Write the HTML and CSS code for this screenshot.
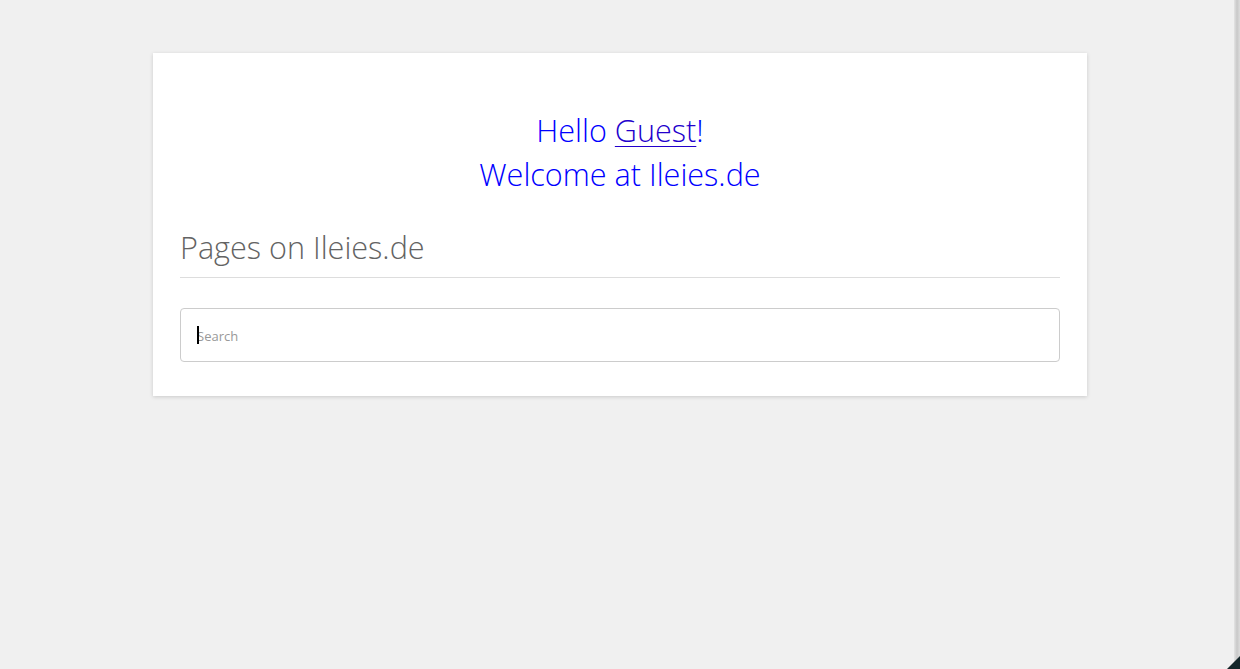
FILE: index.html
```html
<!DOCTYPE html>
<html lang="en">
<head>
<meta charset="utf-8">
<title>Ileies.de</title>
<link rel="stylesheet" href="styles.css">
</head>
<body>
<main class="card">
  <div class="greeting">
    <div class="greeting-line">Hello <a href="#" class="guest">Guest</a>!</div>
    <div class="greeting-line">Welcome at Ileies.de</div>
  </div>
  <h2 class="section-title">Pages on Ileies.de</h2>
  <div class="search-wrap">
    <input class="search" type="text" placeholder="Search" autofocus>
    <span class="caret"></span>
  </div>
</main>
<div class="edge"></div>
<div class="corner"></div>
</body>
</html>
```

FILE: styles.css
```css
html, body {
  margin: 0;
  padding: 0;
  height: 100%;
}
body {
  background: #f0f0f0;
  font-family: "Open Sans", "Noto Sans", sans-serif;
  overflow: hidden;
}
.card {
  width: 934px;
  box-sizing: border-box;
  margin: 53px auto 0;
  background: #fff;
  padding: 27px 27px 34px;
  box-shadow: 0 1px 4px rgba(0, 0, 0, 0.16);
}
.greeting {
  margin-top: 28px;
  text-align: center;
  color: #0000ff;
  font-weight: 300;
  font-size: 30.6px;
  line-height: 44px;
}
.guest {
  color: #2200cc;
  text-decoration: underline;
  text-underline-offset: 4px;
  text-decoration-thickness: 1px;
}
.section-title {
  margin: 35px 0 0;
  padding-bottom: 13px;
  border-bottom: 1px solid #dddddd;
  font-weight: 300;
  font-size: 30.6px;
  line-height: 33px;
  color: #636363;
}
.search-wrap {
  position: relative;
  margin-top: 30px;
}
.search {
  display: block;
  width: 100%;
  box-sizing: border-box;
  height: 54px;
  padding: 2px 16px 0;
  border: 1px solid #cccccc;
  border-radius: 4px;
  font-family: "Open Sans", "Noto Sans", sans-serif;
  font-size: 13px;
  color: #333;
  caret-color: transparent;
  outline: none;
  background: #fff;
}
.search::placeholder {
  color: #999;
}
.caret {
  position: absolute;
  left: 17px;
  top: 18px;
  width: 2px;
  height: 18px;
  background: #000;
}
.edge {
  position: fixed;
  top: 0;
  right: 0;
  width: 6px;
  height: 100%;
  background: linear-gradient(to right, #e4e4e4, #c8c8c8 50%, #dcdcdc);
}
.corner {
  position: fixed;
  right: 0;
  bottom: 0;
  width: 0;
  height: 0;
  border-style: solid;
  border-width: 0 0 13px 13px;
  border-color: transparent transparent #14262a transparent;
}
```
